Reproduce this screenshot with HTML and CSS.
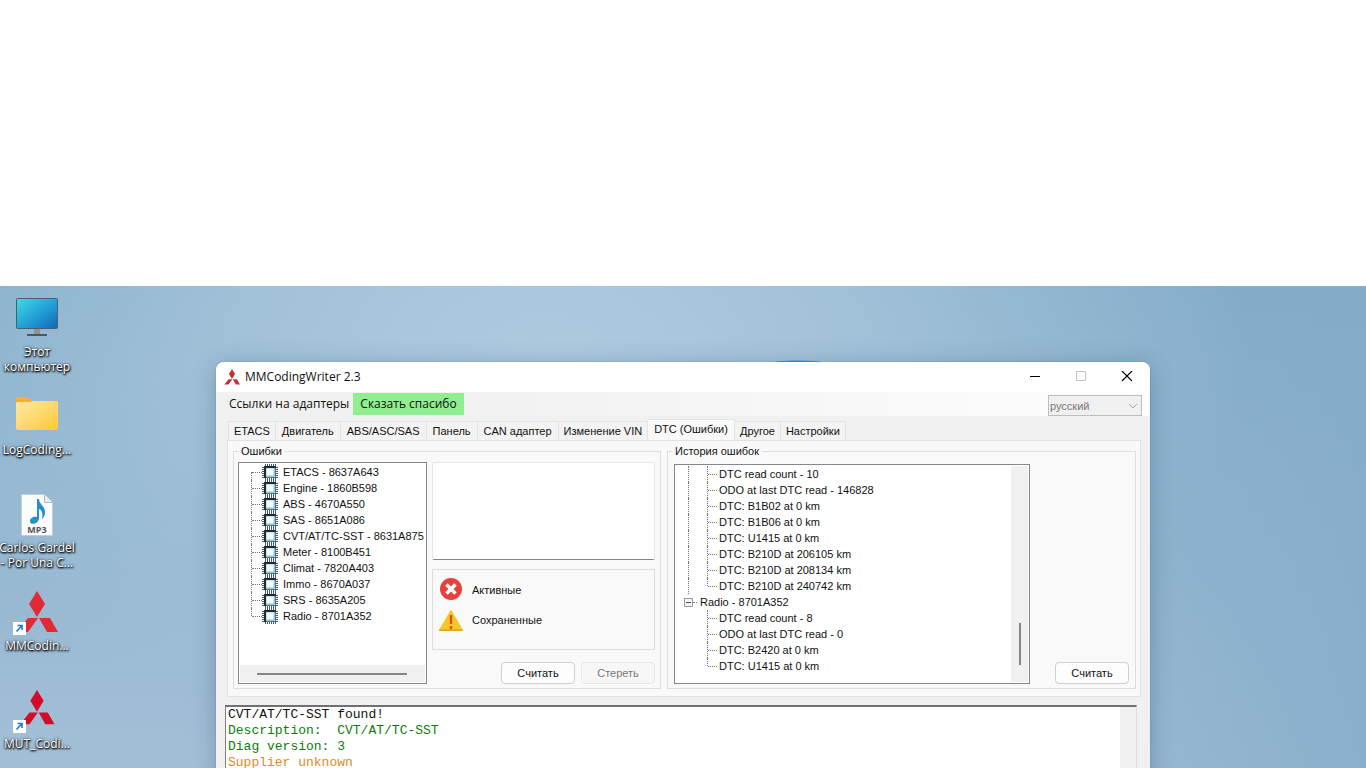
FILE: index.html
```html
<!DOCTYPE html>
<html lang="ru">
<head>
<meta charset="utf-8">
<title>MMCodingWriter 2.3</title>
<link rel="stylesheet" href="styles.css">
</head>
<body>
<svg class="defs" aria-hidden="true">
  <symbol id="diamonds" viewBox="0 0 42 42">
    <path d="M21 0l8 13-8 13-8-13zM12 27h10L12 41H1zM23 27h11l8 14H31z"/>
  </symbol>
  <symbol id="chip" viewBox="0 0 16 16">
    <path d="M3.500 0v16M5.500 0v16M7.500 0v16M9.500 0v16M11.500 0v16M13.500 0v16M0 3.500h16M0 5.500h16M0 7.500h16M0 9.500h16M0 11.500h16M0 13.500h16" stroke="#4a5d6a"/>
    <path d="M2 2h12v12H2z" fill="#1c2d38"/>
    <path d="M4 4h9.500v9.500H4z" fill="#8fc4e8"/>
    <path d="M4.500 4.500h7v7h-7z" fill="#fff"/>
  </symbol>
  <symbol id="shortcut" viewBox="0 0 13 13">
    <path d="M0 0h13v13H0z" fill="#fff"/>
    <path d="M3.500 9.500l5.500-6M4.500 3.500H9V8" fill="none" stroke="#1e7fb8" stroke-width="1.600"/>
  </symbol>
</svg>
<main class="desktop">
  <nav class="shortcuts" aria-label="Рабочий стол">
    <a class="shortcut" href="#">
      <svg class="shortcut-icon" viewBox="0 0 48 48">
        <defs><linearGradient id="screen" x1="0" y1="0" x2="1" y2="1"><stop offset="0" stop-color="#40dce4"/><stop offset=".5" stop-color="#24a3d6"/><stop offset="1" stop-color="#1266b8"/></linearGradient></defs>
        <path d="M21 34h6v5h-6z" fill="#8d9499"/><path d="M14 39h20v2H14z" fill="#50585e"/>
        <rect x="3.500" y="3.500" width="41" height="30" rx="1" fill="url(#screen)" stroke="#45606f"/>
      </svg>
      <span>Этот<br>компьютер</span>
    </a>
    <a class="shortcut" href="#">
      <svg class="shortcut-icon" viewBox="0 0 48 48">
        <defs><linearGradient id="folder" x1="0" y1="0" x2="1" y2="1"><stop offset="0" stop-color="#ffe9a6"/><stop offset="1" stop-color="#ffc936"/></linearGradient></defs>
        <path d="M3 5q0-1 1-1h11l4 4h25q1 0 1 2v12H3z" fill="#f2b32c"/>
        <path d="M3 11q0-2 2-2h12l3-1h23q2 0 2 2v25q0 2-2 2H5q-2 0-2-2z" fill="url(#folder)"/>
      </svg>
      <span>LogCoding...</span>
    </a>
    <a class="shortcut" href="#">
      <svg class="shortcut-icon" viewBox="0 0 48 48">
        <path d="M8.500 3.500h23l8 8v33h-31z" fill="#fcfcfc" stroke="#c6cdd2"/>
        <path d="M31.500 3.500v8h8" fill="#e9edf0" stroke="#a9b4bc"/>
        <path d="M24 8h2c0 5 6 7 6 13 0 3-1 5-3 7 1-6 0-9-3-10v9c0 6-9 8-9 3 0-3 4-5 7-4z" fill="#238fcf"/>
        <text x="24" y="42" text-anchor="middle" class="file-type">MP3</text>
      </svg>
      <span>Carlos Gardel<br>- Por Una C...</span>
    </a>
    <a class="shortcut" href="#">
      <svg class="shortcut-icon" viewBox="0 0 48 48">
        <use href="#diamonds" x="3" y="2" width="42" height="42" fill="#e02b35"/>
        <use href="#shortcut" x="0" y="33" width="13" height="13"/>
      </svg>
      <span>MMCodin...</span>
    </a>
    <a class="shortcut" href="#">
      <svg class="shortcut-icon" viewBox="0 0 48 48">
        <use href="#diamonds" x="5" y="3" width="38" height="35" fill="#d50b2c"/>
        <use href="#shortcut" x="0" y="33" width="13" height="13"/>
      </svg>
      <span>MUT_Codi...</span>
    </a>
  </nav>

  <section class="window" aria-label="MMCodingWriter 2.3">
    <header class="titlebar">
      <svg class="app-icon"><use href="#diamonds" fill="#c8303a"/></svg>
      <h1>MMCodingWriter 2.3</h1>
      <button class="caption" aria-label="Свернуть"><svg viewBox="0 0 12 12"><path d="M1 5.500h10" stroke="#000"/></svg></button>
      <button class="caption" aria-label="Развернуть" disabled><svg viewBox="0 0 12 12"><path d="M1.500 .5h9v9h-9z" fill="none" stroke="#c4c4c4"/></svg></button>
      <button class="caption" aria-label="Закрыть"><svg viewBox="0 0 12 12"><path d="M1 0l10 10M11 0L1 10" stroke="#000" stroke-width="1.200"/></svg></button>
    </header>
    <div class="menubar">
      <button class="menu-item">Ссылки на адаптеры</button>
      <button class="menu-item thanks">Сказать спасибо</button>
      <div class="language">
        <select aria-label="Язык" disabled><option>русский</option></select>
        <svg class="chevron" viewBox="0 0 10 6"><path d="M1 1l4 4 4-4" fill="none" stroke="#a6a6a6"/></svg>
      </div>
    </div>
    <div class="content">
      <div class="tabs" role="tablist">
        <button role="tab">ETACS</button>
        <button role="tab">Двигатель</button>
        <button role="tab">ABS/ASC/SAS</button>
        <button role="tab">Панель</button>
        <button role="tab">CAN адаптер</button>
        <button role="tab">Изменение VIN</button>
        <button role="tab" aria-selected="true">DTC (Ошибки)</button>
        <button role="tab">Другое</button>
        <button role="tab">Настройки</button>
      </div>
      <div class="page" role="tabpanel">
        <fieldset class="errors">
          <legend>Ошибки</legend>
          <div class="columns">
            <div class="tree modules">
              <ul>
                <li><i class="branch first"></i><svg class="chip"><use href="#chip"/></svg>ETACS - 8637A643</li>
                <li><i class="branch"></i><svg class="chip"><use href="#chip"/></svg>Engine - 1860B598</li>
                <li><i class="branch"></i><svg class="chip"><use href="#chip"/></svg>ABS - 4670A550</li>
                <li><i class="branch"></i><svg class="chip"><use href="#chip"/></svg>SAS - 8651A086</li>
                <li><i class="branch"></i><svg class="chip"><use href="#chip"/></svg>CVT/AT/TC-SST - 8631A875</li>
                <li><i class="branch"></i><svg class="chip"><use href="#chip"/></svg>Meter - 8100B451</li>
                <li><i class="branch"></i><svg class="chip"><use href="#chip"/></svg>Climat - 7820A403</li>
                <li><i class="branch"></i><svg class="chip"><use href="#chip"/></svg>Immo - 8670A037</li>
                <li><i class="branch"></i><svg class="chip"><use href="#chip"/></svg>SRS - 8635A205</li>
                <li><i class="branch last"></i><svg class="chip"><use href="#chip"/></svg>Radio - 8701A352</li>
              </ul>
              <div class="scroll-x"><i></i></div>
            </div>
            <div class="details">
              <textarea aria-label="Описание ошибки" readonly></textarea>
              <div class="key">
                <p><svg viewBox="0 0 24 24"><circle cx="12" cy="11" r="11" fill="#e8413d"/><path d="M7.500 6.500l9 9M16.500 6.500l-9 9" stroke="#fff" stroke-width="3.600"/></svg>Активные</p>
                <p><svg viewBox="0 0 24 24"><path d="M12 1.500L24 22q0 1-1 1H1q-1 0-1-1z" fill="#f6c624"/><path d="M0 21.500h24q0 1.500-1 1.500H1q-1 0-1-1.500z" fill="#dda51c"/><path d="M12 7v9M12 18v3" stroke="#d9502c" stroke-width="2.400"/></svg>Сохраненные</p>
              </div>
              <div class="actions">
                <button class="push">Считать</button>
                <button class="push" disabled>Стереть</button>
              </div>
            </div>
          </div>
        </fieldset>
        <fieldset class="history">
          <legend>История ошибок</legend>
          <div class="columns">
            <div class="tree log-tree">
              <ul>
                <li><i class="stem"></i><i class="branch"></i>DTC read count - 10</li>
                <li><i class="stem"></i><i class="branch"></i>ODO at last DTC read - 146828</li>
                <li><i class="stem"></i><i class="branch"></i>DTC: B1B02 at 0 km</li>
                <li><i class="stem"></i><i class="branch"></i>DTC: B1B06 at 0 km</li>
                <li><i class="stem"></i><i class="branch"></i>DTC: U1415 at 0 km</li>
                <li><i class="stem"></i><i class="branch"></i>DTC: B210D at 206105 km</li>
                <li><i class="stem"></i><i class="branch"></i>DTC: B210D at 208134 km</li>
                <li><i class="stem"></i><i class="branch last"></i>DTC: B210D at 240742 km</li>
                <li class="parent"><button class="toggle" aria-label="Свернуть Radio"><svg viewBox="0 0 9 9"><path d="M.5.5h8v8h-8z" fill="#f4f4f4" stroke="#9a9a9a"/><path d="M2 4.500h5" stroke="#3b4d8c"/></svg></button><i class="dash"></i>Radio - 8701A352</li>
                <li><i class="stem blank"></i><i class="branch"></i>DTC read count - 8</li>
                <li><i class="stem blank"></i><i class="branch"></i>ODO at last DTC read - 0</li>
                <li><i class="stem blank"></i><i class="branch"></i>DTC: B2420 at 0 km</li>
                <li><i class="stem blank"></i><i class="branch last"></i>DTC: U1415 at 0 km</li>
              </ul>
              <div class="scroll-y"><i></i></div>
            </div>
            <button class="push">Считать</button>
          </div>
        </fieldset>
      </div>
      <div class="console" role="log">
        <div class="lines">
          <p>CVT/AT/TC-SST found!</p>
          <p class="ok">Description:  CVT/AT/TC-SST</p>
          <p class="ok">Diag version: 3</p>
          <p class="warn">Supplier unknown</p>
        </div>
        <div class="console-scroll"></div>
      </div>
    </div>
  </section>
</main>
</body>
</html>
```
FILE: styles.css
```css
* { box-sizing: border-box; }

html, body { height: 100%; }

body {
  margin: 0;
  padding-top: 286px;
  background: #fff;
  color: #111;
  font: 11px/16px "Liberation Sans", Arial, sans-serif;
}

p, h1, ul, fieldset { margin: 0; padding: 0; }
ul { list-style: none; }
button { font: inherit; color: inherit; border: 0; background: none; padding: 0; }
svg { display: block; flex: none; }
.defs { position: absolute; width: 0; height: 0; }

.desktop {
  height: 100%;
  overflow: hidden;
  display: grid;
  grid-template-columns: minmax(74px, 1fr) minmax(0, 934px) minmax(0, 1fr);
  background:
    radial-gradient(ellipse 90px 40px at 798px 114px, #3f9be4 98%, transparent 100%),
    radial-gradient(ellipse 700px 400px at 40% 14%, #adcadf 0%, #a3c2d9 40%, transparent 100%),
    linear-gradient(90deg, transparent 70%, #84abc8cc 100%),
    linear-gradient(#84adca, #a3bfd7);
}

/* Desktop shortcuts */
.shortcuts { padding-top: 9px; }
.shortcut {
  display: flex;
  flex-direction: column;
  align-items: center;
  width: 74px;
  height: 98px;
  color: #fff;
  text-align: center;
  text-decoration: none;
  white-space: nowrap;
  font: 12px/15px "Open Sans", "Noto Sans", sans-serif;
  text-shadow: 0 1px 2px #000, 1px 1px 2px #000, 0 0 3px #0008;
}
.shortcut-icon { width: 48px; height: 48px; margin-bottom: 1px; }
.file-type { font: bold 9px "Open Sans", sans-serif; fill: #555; text-shadow: none; }

/* Window frame */
.window {
  margin-top: 76px;
  display: flex;
  flex-direction: column;
  background: #f0f0f0;
  border-radius: 8px 8px 0 0;
  overflow: hidden;
  box-shadow: 0 0 1px #0009, 0 4px 24px #1c3a5a4d;
}
.titlebar {
  display: flex;
  align-items: center;
  height: 30px;
  padding: 0 0 0 8px;
  background: #fff;
}
.app-icon { width: 16px; height: 16px; margin-right: 5px; }
.titlebar h1 { flex: 1; font: 12px/16px "Open Sans", "Noto Sans", sans-serif; }
.caption { display: flex; justify-content: center; align-items: center; width: 46px; height: 30px; }
.caption svg { width: 12px; height: 12px; }

.menubar {
  display: flex;
  align-items: center;
  height: 24px;
  padding: 0 8px 0 9px;
  background: linear-gradient(90deg, #f0f0f0 20%, #fdfdfd);
  font: 12px/16px "Open Sans", "Noto Sans", sans-serif;
}
.menu-item { height: 22px; padding: 0 4px; color: #111; white-space: nowrap; }
.thanks { padding: 0 7px; background: #90ee90; }
.language {
  display: grid;
  align-items: center;
  width: 94px;
  height: 21px;
  margin: 3px 0 0 auto;
}
.language select {
  grid-area: 1 / 1;
  appearance: none;
  width: 94px;
  height: 21px;
  padding: 0 1px;
  border: 1px solid #bdbdbd;
  border-radius: 0;
  background: #f0f0f0;
  color: #777;
  opacity: 1;
  font: 11px/16px "Liberation Sans", Arial, sans-serif;
}
.chevron { grid-area: 1 / 1; justify-self: end; width: 10px; height: 6px; margin-right: 4px; }

/* Tabs */
.content {
  flex: 1;
  display: flex;
  flex-direction: column;
  min-height: 0;
  padding: 3px 9px 0 11px;
}
.tabs {
  display: flex;
  align-items: flex-end;
  height: 22px;
  padding-left: 1px;
  margin-bottom: -1px;
}
.tabs button {
  height: 20px;
  padding: 0 5px;
  border: 1px solid #e3e3e3;
  border-left-width: 0;
  background: #f3f3f3;
  white-space: nowrap;
}
.tabs button:first-child { border-left-width: 1px; }
.tabs button:nth-child(n + 2):nth-child(-n + 5) { padding: 0 6px; }
.tabs [aria-selected="true"] {
  height: 22px;
  padding: 0 6px 3px;
  border-bottom: 0;
  background: #f9f9f9;
}
.page {
  display: flex;
  gap: 6px;
  flex: none;
  height: 257px;
  padding: 3px 4px 7px 5px;
  border: 1px solid #dfe2e4;
  background: #f9f9f9;
}
fieldset { min-width: 0; border: 1px solid #dcdcdc; }
legend { margin-left: 4px; padding: 0 3px 0 2px; line-height: 14px; }
.errors { flex: 0 1 428px; padding: 4px 5px 4px 4px; }
.errors legend { margin-left: 1px; }
.history { flex: 1; padding: 6px 6px 4px 6px; }
.history legend { margin-left: -1px; }
.columns { display: flex; gap: 5px; height: 100%; }
.history .columns { justify-content: space-between; align-items: flex-end; }

/* Trees */
.tree {
  display: flex;
  border: 1px solid #828790;
  background: #fff;
  overflow: hidden;
  white-space: nowrap;
}
.tree li { display: flex; align-items: center; height: 16px; }
.modules { flex: 0 0 189px; flex-direction: column; justify-content: space-between; padding: 1px; }
.modules ul { padding-left: 11px; }
.log-tree { flex: 0 1 356px; height: 100%; padding: 1px; }
.log-tree ul { flex: 1; padding-left: 12px; }

.branch { display: flex; width: 11px; height: 16px; align-items: flex-start; }
.branch::before { content: ""; height: 16px; border-left: 1px dotted #777; }
.branch::after { content: ""; flex: 1; align-self: center; border-top: 1px dotted #777; }
.branch.first::before { height: 8px; align-self: flex-end; }
.branch.last::before { height: 8px; }
.stem { width: 19px; height: 16px; border-left: 1px dotted #777; }
.stem.blank { border-color: transparent; }
.log-tree .branch { width: 10px; margin-right: 2px; }
.chip { width: 16px; height: 16px; margin-right: 5px; }
.log-tree .parent { margin-left: -4px; }
.toggle { width: 9px; height: 9px; }
.toggle svg { width: 9px; height: 9px; }
.dash { width: 4px; margin-right: 3px; border-top: 1px dotted #777; }

.scroll-x { display: flex; align-items: center; height: 17px; padding: 0 17px; background: #f0f0f0; }
.scroll-x i { width: 150px; height: 2px; background: #868686; }
.scroll-y { display: flex; align-items: flex-end; justify-content: center; width: 17px; padding-bottom: 17px; background: #f0f0f0; }
.scroll-y i { width: 2px; height: 42px; background: #868686; }

/* Error details */
.details { flex: 1; display: flex; flex-direction: column; min-width: 0; }
.details textarea {
  display: block;
  width: 100%;
  height: 98px;
  border: 1px solid #e6e6e6;
  border-bottom-color: #868686;
  border-radius: 2px;
  background: #fff;
  resize: none;
}
.key {
  display: flex;
  flex-direction: column;
  gap: 6px;
  height: 81px;
  margin-top: 9px;
  padding: 8px 6px;
  border: 1px solid #dcdcdc;
}
.key p { display: flex; align-items: center; gap: 9px; }
.key svg { width: 24px; height: 24px; }
.actions { display: flex; justify-content: flex-end; gap: 6px; margin: auto 0 0; }
.push {
  flex: none;
  width: 74px;
  height: 22px;
  border: 1px solid #cfcfcf;
  border-radius: 4px;
  background: #fdfdfd;
}
.push:disabled { border-color: #e6e6e6; background: #f7f7f7; color: #777; }

/* Console */
.console {
  flex: 1;
  display: flex;
  min-height: 64px;
  margin: 8px 4px 0 -2px;
  border: 1px solid #828282;
  border-top: 2px solid #707070;
  border-right-color: #ddd;
  border-bottom: 0;
  background: #fff;
  overflow: hidden;
  font: 13px/16px "Liberation Mono", "Courier New", monospace;
}
.lines { flex: 1; padding: 0 2px; }
.lines p { white-space: pre; }
.ok { color: #0a7d0a; }
.warn { color: #e08a1c; }
.console-scroll { width: 16px; background: #f0f0f0; }
```
